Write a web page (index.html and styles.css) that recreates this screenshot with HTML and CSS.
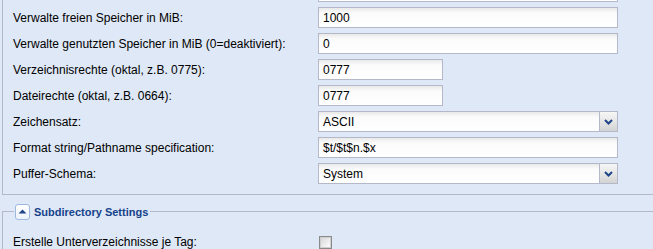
FILE: index.html
```html
<!DOCTYPE html>
<html>
<head>
<meta charset="utf-8">
<link rel="stylesheet" href="styles.css">
</head>
<body>
<div class="page">
  <fieldset class="fs fs-top">
    <div class="row"><label class="lbl"></label><div class="field long"><span class="text"></span></div></div>
    <div class="row"><label class="lbl">Verwalte freien Speicher in MiB:</label><div class="field long"><span class="text">1000</span></div></div>
    <div class="row"><label class="lbl">Verwalte genutzten Speicher in MiB (0=deaktiviert):</label><div class="field long"><span class="text">0</span></div></div>
    <div class="row"><label class="lbl">Verzeichnisrechte (oktal, z.B. 0775):</label><div class="field short"><span class="text">0777</span></div></div>
    <div class="row"><label class="lbl">Dateirechte (oktal, z.B. 0664):</label><div class="field short"><span class="text">0777</span></div></div>
    <div class="row"><label class="lbl">Zeichensatz:</label><div class="field long combo"><span class="text">ASCII</span><span class="trigger"><svg width="9" height="6" viewBox="0 0 9 6"><path d="M1 1 L4.5 4.5 L8 1" fill="none" stroke="#1d4487" stroke-width="2"/></svg></span></div></div>
    <div class="row"><label class="lbl">Format string/Pathname specification:</label><div class="field long"><span class="text">$t/$t$n.$x</span></div></div>
    <div class="row"><label class="lbl">Puffer-Schema:</label><div class="field long combo"><span class="text">System</span><span class="trigger"><svg width="9" height="6" viewBox="0 0 9 6"><path d="M1 1 L4.5 4.5 L8 1" fill="none" stroke="#1d4487" stroke-width="2"/></svg></span></div></div>
  </fieldset>
  <fieldset class="fs fs-sub">
    <legend class="legend"><span class="tool"><svg width="9" height="5" viewBox="0 0 9 5"><path d="M0.5 4.5 L4.5 0.5 L8.5 4.5 Z" fill="#1d4487"/></svg></span><span class="legend-text">Subdirectory Settings</span></legend>
    <div class="row"><label class="lbl">Erstelle Unterverzeichnisse je Tag:</label><div class="checkwrap"><span class="check"></span></div></div>
  </fieldset>
</div>
</body>
</html>
```
FILE: styles.css
```css
html, body {
  margin: 0;
  padding: 0;
  background: #dfe8f6;
  font-family: "Liberation Sans", Arial, sans-serif;
  font-size: 12px;
  color: #000;
  overflow: hidden;
}
.page {
  padding-left: 2px;
}
.fs {
  margin: 0;
  border: 1px solid #b5b8c8;
  border-right: none;
  padding: 0 0 0 10px;
  min-width: 0;
}
.fs-top {
  border-top: none;
  margin-top: -19px;
  padding-bottom: 5px;
}
.fs-sub {
  margin-top: 7px;
  padding-top: 10px;
  border-bottom: none;
}
.row {
  display: flex;
  align-items: center;
  height: 21px;
  margin-bottom: 5px;
}
.lbl {
  width: 305px;
  flex: none;
  line-height: 14px;
  padding-top: 1px;
}
.field {
  box-sizing: border-box;
  height: 21px;
  border: 1px solid #b5b8c8;
  background: linear-gradient(to bottom, #e9e9e9 0, #fbfbfb 5px, #ffffff 100%);
  display: flex;
  align-items: center;
}
.field.long { width: 300px; }
.field.short { width: 125px; }
.text {
  flex: 1;
  padding: 1px 3px 0 4px;
  line-height: 14px;
  white-space: nowrap;
}
.trigger {
  width: 17px;
  align-self: stretch;
  border-left: 1px solid #b5b8c8;
  background: linear-gradient(to bottom, #f6f6f6 0, #e6e6e6 50%, #d3d3d3 100%);
  display: flex;
  align-items: center;
  justify-content: center;
}
.legend {
  display: flex;
  align-items: center;
  padding: 0 2px 0 1px;
  height: 19px;
  margin-left: 1px;
}
.tool {
  box-sizing: border-box;
  width: 15px;
  height: 16px;
  border: 1px solid #9db8de;
  border-radius: 3px;
  background: linear-gradient(to bottom, #ffffff 0, #eef3fb 100%);
  display: flex;
  align-items: center;
  justify-content: center;
  margin-right: 4px;
}
.legend-text {
  font-weight: bold;
  font-size: 11px;
  color: #15428b;
}
.checkwrap {
  display: flex;
  align-items: center;
  padding-left: 1px;
}
.check {
  box-sizing: border-box;
  width: 13px;
  height: 13px;
  border: 1px solid #8a8a8a;
  box-shadow: inset 0 0 0 1px #cfcfcf;
  background: linear-gradient(135deg, #d4d4d4 0, #f4f4f4 70%, #ffffff 100%);
  margin-top: 1px;
}
```
